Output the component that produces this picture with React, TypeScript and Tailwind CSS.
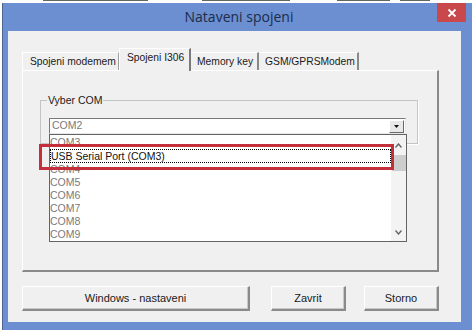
import React from "react";

const items = ["COM4", "COM5", "COM6", "COM7", "COM8", "COM9"];

function Button({ label, w }: { label: string; w: string }) {
  return (
    <div
      className={`${w} shrink-0 h-[25px] flex items-center justify-center bg-[#f0f0f0] border-t border-l border-t-white border-l-white border-r-2 border-b-2 border-r-[#8a8a8a] border-b-[#8a8a8a] text-[11px] text-[#1a1a1a] whitespace-nowrap shadow-[inset_-1px_-1px_0_#c8c8c8]`}
    >
      {label}
    </div>
  );
}

export default function App() {
  return (
    <div className="w-[472px] h-[330px] bg-white overflow-hidden flex flex-col font-['Liberation_Sans',Arial,sans-serif]">
      {/* background window remnants */}
      <div className="h-[3px] flex items-start">
        <div className="w-[43px] shrink-0" />
        <div className="w-[105px] shrink-0 h-[1px] bg-[#666]" />
        <div className="w-[54px] shrink-0" />
        <div className="w-[88px] shrink-0 h-[1px] bg-[#666]" />
        <div className="w-[47px] shrink-0" />
        <div className="w-[53px] shrink-0 h-[1px] bg-[#666]" />
        <div className="w-[10px] shrink-0" />
        <div className="w-[30px] shrink-0 h-[1px] bg-[#666]" />
      </div>
      <div className="flex flex-1">
        <div className="w-[2px] shrink-0" />
        <div className="w-[476px] shrink-0 h-[327px] bg-[#6b8fd0] border-l border-[#4d6690] flex flex-col">
          {/* title bar */}
          <div className="h-[28px] flex items-start">
            <div className="w-[434px] shrink-0 h-[26px] flex items-center justify-center pl-[38px] font-['Open_Sans',sans-serif] text-[14px] text-[#1c2b4b]">
              Nataveni spojeni
            </div>
            <div className="w-[29px] shrink-0 h-[19px] bg-[#c8484b] flex items-center justify-center">
              <svg width="10" height="10" viewBox="0 0 10 10">
                <path d="M1.5 1.5 L8.5 8.5 M8.5 1.5 L1.5 8.5" stroke="white" strokeWidth="1.8" />
              </svg>
            </div>
          </div>
          {/* client */}
          <div className="ml-[5px] w-[453px] h-[291px] bg-[#f0f0f0] pt-[17px] pl-[14px] flex flex-col">
            {/* tabs */}
            <div className="h-[22px] flex items-end text-[10.3px] text-[#1a1a1a] whitespace-nowrap relative z-10">
              <div className="w-[97px] shrink-0 h-[18px] border-t border-l border-white border-r border-r-[#a0a0a0] pl-[7px] flex items-center">
                Spojeni modemem
              </div>
              <div className="w-[72px] shrink-0 h-[23px] -mb-[1px] bg-[#f0f0f0] border-t border-l border-white border-r-2 border-r-[#7a7a7a] pl-[7px] pb-[4px] flex items-center">
                Spojeni I306
              </div>
              <div className="w-[68px] shrink-0 h-[18px] border-t border-white border-r-2 border-r-[#8a8a8a] pl-[6px] flex items-center">
                Memory key
              </div>
              <div className="w-[100px] shrink-0 h-[18px] border-t border-white border-r-2 border-r-[#8a8a8a] pl-[6px] flex items-center">
                GSM/GPRSModem
              </div>
            </div>
            {/* panel */}
            <div className="w-[417px] h-[202px] border-t border-l border-white border-r-2 border-b-2 border-r-[#8a8a8a] border-b-[#8a8a8a] pl-[17px] pt-[29px]">
              <div className="relative w-[378px] h-[44px] border border-[#c4c4c4] shadow-[1px_1px_0_white]">
                <div className="absolute -top-[8px] left-[6px] px-[1px] bg-[#f0f0f0] text-[10.5px] text-[#1a1a1a] leading-[14px] whitespace-nowrap">
                  Vyber COM
                </div>
                {/* combo */}
                <div className="relative mt-[17px] ml-[8px] w-[357px] h-[16px] bg-white border-t border-l border-[#7a7a7a] border-r border-b border-r-[#e8e8e8] border-b-[#e8e8e8] flex items-center">
                  <span className="pl-[2px] text-[10.5px] text-[#7a7a7a]">COM2</span>
                  <div className="ml-auto mr-[1px] w-[15px] h-[13px] bg-[#e8e8e8] border-t border-l border-white border-r border-b border-r-[#6a6a6a] border-b-[#6a6a6a] flex items-center justify-center">
                    <svg width="5" height="3" viewBox="0 0 5 3">
                      <path d="M0 0 H5 L2.5 3 Z" fill="#111" />
                    </svg>
                  </div>
                  {/* dropdown list */}
                  <div className="absolute left-[-1px] top-[15px] w-[358px] h-[108px] bg-white border border-[#646464] flex z-20">
                    <div className="flex-1 pt-[1px] text-[10.5px] leading-[13px] text-[#7a7a7a] whitespace-nowrap overflow-hidden">
                      <div className="h-[13px]">COM3</div>
                      <div className="h-[14px] border border-dotted border-black text-[#111] flex items-center">
                        USB Serial Port (COM3)
                      </div>
                      {items.map((c) => (
                        <div key={c} className="h-[13px]">
                          {c}
                        </div>
                      ))}
                    </div>
                    <div className="w-[15px] bg-[#f3f3f3] flex flex-col items-center">
                      <svg className="mt-[8px]" width="7" height="5" viewBox="0 0 7 5">
                        <path d="M0.5 4.5 L3.5 1 L6.5 4.5" stroke="#666" strokeWidth="1.4" fill="none" />
                      </svg>
                      <div className="mt-[7px] w-[14px] h-[16px] bg-[#cdcdcd]" />
                      <div className="flex-1" />
                      <svg className="mb-[6px]" width="7" height="5" viewBox="0 0 7 5">
                        <path d="M0.5 0.5 L3.5 4 L6.5 0.5" stroke="#666" strokeWidth="1.4" fill="none" />
                      </svg>
                    </div>
                    {/* annotation */}
                    <div className="absolute left-[-11px] top-[9px] w-[355px] h-[26px] border-[3px] border-[#c3303b]" />
                  </div>
                </div>
              </div>
            </div>
            {/* buttons */}
            <div className="mt-[14px] flex">
              <Button label="Windows - nastaveni" w="w-[228px]" />
              <div className="w-[21px] shrink-0" />
              <Button label="Zavrit" w="w-[75px]" />
              <div className="w-[18px] shrink-0" />
              <Button label="Storno" w="w-[75px]" />
            </div>
          </div>
        </div>
      </div>
    </div>
  );
}
